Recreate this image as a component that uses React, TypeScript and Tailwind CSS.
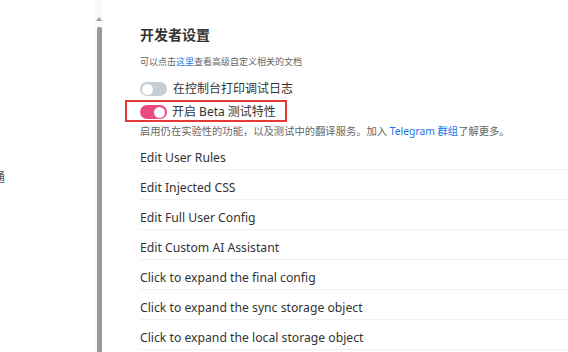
import React from "react";

const items = [
  "Edit User Rules",
  "Edit Injected CSS",
  "Edit Full User Config",
  "Edit Custom AI Assistant",
  "Click to expand the final config",
  "Click to expand the sync storage object",
  "Click to expand the local storage object",
];

function Toggle({ on }: { on: boolean }) {
  return (
    <div
      className={`relative w-[27px] h-[14px] rounded-full shrink-0 ${
        on ? "bg-[#ea4a80]" : "bg-[#c6cdd4]"
      }`}
    >
      <div
        className={`absolute top-[1.5px] w-[11px] h-[11px] rounded-full bg-white ${
          on ? "right-[2px]" : "left-[2px]"
        }`}
      />
    </div>
  );
}

export default function App() {
  return (
    <div
      className="w-[568px] h-[352px] overflow-hidden bg-white flex text-[#333]"
      style={{ fontFamily: '"Noto Sans", "Noto Sans CJK SC", sans-serif' }}
    >
      <div className="w-[95px] shrink-0 relative overflow-hidden">
        <div className="absolute left-[-7px] top-[169px] text-[12px] leading-[18px] text-[#4b5563]">
          通
        </div>
      </div>
      <div className="w-[8px] shrink-0 bg-[#f9f9f9] flex flex-col items-center pt-[17px]">
        <div className="w-0 h-0 border-l-[3px] border-r-[3px] border-b-[4px] border-l-transparent border-r-transparent border-b-[#a0a0a0]" />
        <div className="mt-[6px] w-[5px] flex-1 bg-[#999999] rounded-t-[2px]" />
      </div>
      <div className="flex-1 pl-[37px] pt-[25px] flex flex-col">
        <div className="text-[14px] leading-[20px] font-bold text-[#333]">开发者设置</div>
        <div className="mt-[10px] text-[9px] leading-[14px] text-[#666]">
          可以点击<span className="text-[#1a73e8]">这里</span>查看高级自定义相关的文档
        </div>
        <div className="mt-[10px] h-[20px] flex items-center gap-[6px]">
          <Toggle on={false} />
          <span className="text-[12px] leading-[20px] text-[#333]">在控制台打印调试日志</span>
        </div>
        <div className="mt-[1px] -ml-[15px] w-[162px] h-[22px] border-2 border-[#e53935] flex items-center gap-[5px] pl-[13px] pt-[2px]">
          <Toggle on={true} />
          <span className="text-[12px] leading-[18px] text-[#333]">开启 Beta 测试特性</span>
        </div>
        <div className="mt-[2px] text-[10.3px] leading-[14px] text-[#666] whitespace-nowrap">
          启用仍在实验性的功能，以及测试中的翻译服务。加入{" "}
          <span className="text-[#1a73e8]">Telegram 群组</span>了解更多。
        </div>
        <div className="mt-[2px] flex flex-col">
          {items.map((t) => (
            <div
              key={t}
              className="h-[30px] shrink-0 flex items-center pt-[6px] border-b border-[#f0f0f0] text-[12.2px] leading-[20px] text-[#333] whitespace-nowrap"
            >
              {t}
            </div>
          ))}
        </div>
      </div>
    </div>
  );
}
